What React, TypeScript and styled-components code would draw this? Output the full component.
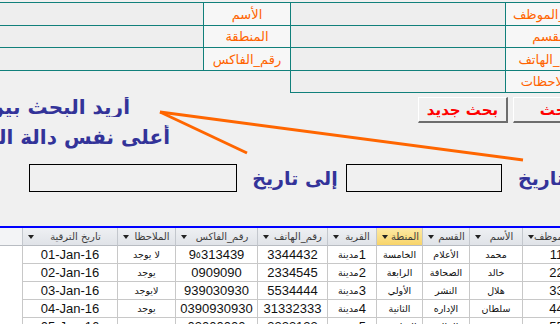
import React from "react";
import styled, { createGlobalStyle } from "styled-components";

const GlobalStyle = createGlobalStyle`
  html, body { margin: 0; padding: 0; }
  body { background: #f0f0f0; font-family: "DejaVu Sans", "Liberation Sans", sans-serif; }
`;

const TEAL = "#11807b";

const Page = styled.div`
  position: relative;
  width: 560px;
  height: 324px;
  overflow: hidden;
  background: #f0f0f0;
`;

const Canvas = styled.div`
  width: 600px;
  display: flex;
  flex-direction: column;
`;

const FormTop = styled.div`
  display: flex;
  align-items: flex-start;
  padding-top: 2px;
`;

const FieldTable = styled.div<{ $inputW: number; $labelW: number; $rows: string; $shift?: number }>`
  flex: none;
  display: grid;
  grid-template-columns: ${(p) => p.$inputW}px ${(p) => p.$labelW}px;
  grid-template-rows: ${(p) => p.$rows};
  border-top: 1px solid ${TEAL};
  margin-left: ${(p) => p.$shift ?? 0}px;
`;

const InputCell = styled.div`
  border-left: 1px solid ${TEAL};
  border-bottom: 1px solid ${TEAL};
  background: #eeeeee;
`;

const LabelCell = styled.div`
  border-left: 1px solid ${TEAL};
  border-bottom: 1px solid ${TEAL};
  background: #f7f7f7;
  color: #ff6400;
  font-family: "DejaVu Sans", sans-serif;
  font-size: 13px;
  display: flex;
  align-items: center;
  justify-content: center;
  direction: rtl;
  white-space: nowrap;
  overflow: hidden;
`;

const ActionRow = styled.div`
  display: flex;
  align-items: flex-start;
  height: 26px;
  margin-top: 4px;
`;

const Title = styled.div<{ $w: number; $h: number }>`
  flex: none;
  width: ${(p) => p.$w}px;
  height: ${(p) => p.$h}px;
  line-height: ${(p) => p.$h}px;
  overflow: hidden;
  direction: rtl;
  text-align: right;
  white-space: nowrap;
  color: #333399;
  font-family: "DejaVu Sans", sans-serif;
  font-weight: bold;
  font-size: 20px;
`;

const ButtonGroup = styled.div`
  margin-left: auto;
  display: flex;
  gap: 5px;
`;

const Button = styled.button<{ $w: number }>`
  flex: none;
  width: ${(p) => p.$w}px;
  height: 26px;
  padding: 0;
  background: #f0f0f0;
  border-style: solid;
  border-width: 1px 2px 2px 1px;
  border-color: #ffffff #6d6d6d #6d6d6d #ffffff;
  color: #ff0000;
  font-family: "DejaVu Sans", sans-serif;
  font-weight: bold;
  font-size: 15px;
  direction: rtl;
  white-space: nowrap;
  overflow: hidden;
`;

const SubRow = styled.div`
  margin-top: 2px;
  display: flex;
`;

const DateRow = styled.div`
  margin-top: 15px;
  display: flex;
  align-items: center;
  height: 28px;
  padding-left: 29px;
`;

const DateBox = styled.div<{ $w: number; $gap?: number }>`
  flex: none;
  width: ${(p) => p.$w}px;
  margin-left: ${(p) => p.$gap ?? 0}px;
  height: 28px;
  box-sizing: border-box;
  border: 1px solid #000;
  background: #f0f0f0;
`;

const DateLabel = styled.div<{ $w: number; $gap: number; $align: string }>`
  flex: none;
  width: ${(p) => p.$w}px;
  margin-left: ${(p) => p.$gap}px;
  display: flex;
  justify-content: ${(p) => p.$align};
  white-space: nowrap;
  color: #333399;
  font-family: "DejaVu Sans", sans-serif;
  font-weight: bold;
  font-size: 19px;
  line-height: 28px;
`;

const Rtl = styled.span`
  direction: rtl;
  unicode-bidi: isolate;
`;

const Sheet = styled.div`
  margin-top: 34px;
  border-top: 2px solid #0000ff;
  display: grid;
  grid-template-columns: 23px 95px 58px 82px 70px 49px 46px 47px 53px 68px;
  grid-auto-rows: 18px;
  background: #ffffff;
`;

const HeadCell = styled.div<{ $active?: boolean; $blank?: boolean }>`
  display: flex;
  align-items: center;
  padding-left: 5px;
  background: ${(p) =>
    p.$active
      ? "linear-gradient(#fdeaa6, #f8d469)"
      : p.$blank
      ? "#f3f4f6"
      : "linear-gradient(#eef0f3, #e0e3e8)"};
  border-right: 1px solid #c3c7cd;
  border-bottom: 1px solid #b8bcc2;
  overflow: hidden;
  white-space: nowrap;
`;

const DropArrow = styled.span`
  flex: none;
  width: 0;
  height: 0;
  border-left: 3.5px solid transparent;
  border-right: 3.5px solid transparent;
  border-top: 4px solid #222;
  margin-top: 1px;
`;

const HeadLabel = styled.span`
  flex: 1;
  text-align: center;
  direction: rtl;
  font-family: "DejaVu Sans", sans-serif;
  font-size: 10px;
  color: #3c3c3c;
`;

const DataCell = styled.div<{ $blank?: boolean }>`
  display: flex;
  align-items: center;
  justify-content: center;
  border-right: 1px solid #c8c8c8;
  border-bottom: ${(p) => (p.$blank ? "none" : "1px solid #c8c8c8")};
  font-family: "Liberation Sans", "DejaVu Sans", sans-serif;
  font-size: 13px;
  color: #111;
  white-space: nowrap;
  overflow: hidden;
`;

const ArRun = styled.span`
  direction: rtl;
  unicode-bidi: isolate;
  font-family: "DejaVu Sans", sans-serif;
  font-size: 9.5px;
`;

const Overlay = styled.svg`
  position: absolute;
  left: 0;
  top: 0;
  pointer-events: none;
`;

const renderMixed = (s: string) =>
  s
    .split(/([\u0600-\u06FF][\u0600-\u06FF ]*)/)
    .filter((p) => p !== "")
    .map((p, i) =>
      /[\u0600-\u06FF]/.test(p) ? <ArRun key={i}>{p}</ArRun> : <React.Fragment key={i}>{p}</React.Fragment>
    );

const headers = [
  "تاريخ الترقية",
  "الملاحظا",
  "رقم_الفاكس",
  "رقم_الهاتف",
  "القرية",
  "المنطة",
  "القسم",
  "الأسم",
  "رقم_الموظف",
];

const rows: string[][] = [
  ["01-Jan-16", "لا يوجد", "9٥313439", "3344432", "مدينة1", "الخامسة", "الأعلام", "محمد", "11"],
  ["02-Jan-16", "يوجد", "0909090", "2334545", "مدينة2", "الرابعة", "الصحافة", "خالد", "22"],
  ["03-Jan-16", "لايوجد", "939030930", "5534444", "مدينة3", "الأولي", "النشر", "هلال", "33"],
  ["04-Jan-16", "يوجد", "0390930930", "31332333", "مدينة4", "الثانية", "الإداره", "سلطان", "44"],
  ["05-Jan-16", "يوجد", "03000000", "3323123", "مدينة5", "السادسة", "المالية", "عمر", "55"],
];

export default function App() {
  return (
    <Page>
      <GlobalStyle />
      <Canvas>
        <FormTop>
          <FieldTable $inputW={204} $labelW={87} $rows="23px 22px 23px" $shift={-1}>
            <InputCell />
            <LabelCell>الأسم</LabelCell>
            <InputCell />
            <LabelCell>المنطقة</LabelCell>
            <InputCell />
            <LabelCell>رقم_الفاكس</LabelCell>
          </FieldTable>
          <FieldTable $inputW={215} $labelW={88} $rows="23px 22px 23px 22px">
            <InputCell />
            <LabelCell>رقم_الموظف</LabelCell>
            <InputCell />
            <LabelCell>القسم</LabelCell>
            <InputCell />
            <LabelCell>رقم_الهاتف</LabelCell>
            <InputCell />
            <LabelCell>الملاحظات</LabelCell>
          </FieldTable>
        </FormTop>

        <ActionRow>
          <Title $w={130} $h={20}>أريد البحث بين تاريخين</Title>
          <ButtonGroup>
            <Button $w={90}>بحث جديد</Button>
            <Button $w={87}>بحث</Button>
          </ButtonGroup>
        </ActionRow>

        <SubRow>
          <Title $w={170} $h={24}>أعلى نفس دالة البحث</Title>
        </SubRow>

        <DateRow>
          <DateBox $w={208} />
          <DateLabel $w={88} $gap={14} $align="center">
            <Rtl>إلى تاريخ</Rtl>
          </DateLabel>
          <DateBox $w={156} $gap={7} />
          <DateLabel $w={80} $gap={16} $align="flex-start">
            <Rtl>من تاريخ</Rtl>
          </DateLabel>
        </DateRow>

        <Sheet>
          <HeadCell $blank />
          {headers.map((h, i) => (
            <HeadCell key={h} $active={i === 5}>
              <DropArrow />
              <HeadLabel>{h}</HeadLabel>
            </HeadCell>
          ))}
          {rows.map((r, ri) => (
            <React.Fragment key={ri}>
              <DataCell $blank />
              {r.map((v, ci) => (
                <DataCell key={ci}>{renderMixed(v)}</DataCell>
              ))}
            </React.Fragment>
          ))}
        </Sheet>
      </Canvas>

      <Overlay width={560} height={324}>
        <line x1={160} y1={112} x2={523} y2={160} stroke="#ff6600" strokeWidth={3} />
        <line x1={160} y1={112} x2={247} y2={153} stroke="#ff6600" strokeWidth={3} />
      </Overlay>
    </Page>
  );
}
